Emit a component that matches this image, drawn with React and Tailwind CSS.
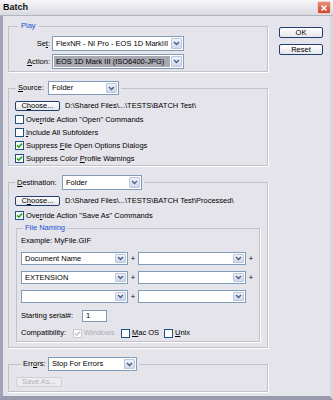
import React from 'react';

const Chevron = () => (
  <svg width="7" height="5" viewBox="0 0 7 5">
    <path d="M1 1 L3.5 3.5 L6 1" fill="none" stroke="#4d6185" strokeWidth="1.5" />
  </svg>
);

function Select({ value, className = '', hi }) {
  return (
    <div className={`flex border border-[#7f9db9] bg-white ${className}`}>
      <div className="flex-1 flex p-[1px] min-w-0">
        <span className={`flex-1 flex items-center px-[2px] whitespace-nowrap overflow-hidden ${hi ? 'bg-[#a9a9b3]' : ''}`}>
          {value}
        </span>
      </div>
      <div className="w-[11px] my-[1px] mr-[1px] flex items-center justify-center bg-gradient-to-b from-[#eef1f8] to-[#cfd8ec] border border-[#bcc6dc] rounded-[1px]">
        <Chevron />
      </div>
    </div>
  );
}

function Check({ checked, disabled, children }) {
  return (
    <div className="flex items-center gap-[2px]">
      <span
        className={`w-[9px] h-[9px] border flex items-center justify-center bg-white ${
          disabled ? 'border-[#c8c8ce]' : 'border-[#1c5180]'
        }`}
      >
        {checked && (
          <svg width="7" height="7" viewBox="0 0 7 7">
            <path
              d="M1 3.4 L2.8 5.2 L6 1.6"
              fill="none"
              stroke={disabled ? '#c4c4ca' : '#21a121'}
              strokeWidth="1.6"
            />
          </svg>
        )}
      </span>
      <span className={disabled ? 'text-[#acacb4]' : ''}>{children}</span>
    </div>
  );
}

function Btn({ children, className = '', disabled }) {
  return (
    <div
      className={`flex items-center justify-center rounded-[2px] border ${
        disabled
          ? 'border-[#cfcfd4] text-[#b0b0b8] bg-[#ececf0]'
          : 'border-[#1f3f73] bg-gradient-to-b from-white to-[#e6e6ea]'
      } ${className}`}
    >
      {children}
    </div>
  );
}

const U = ({ children }) => <span className="underline underline-offset-1">{children}</span>;

export default function App() {
  return (
    <div className="w-[333px] h-[400px] flex flex-col bg-[#e4e4ea] text-[7.5px] leading-none text-black font-['Liberation_Sans',Arial,sans-serif]">
      {/* Title bar */}
      <div className="h-[16px] flex items-center bg-gradient-to-b from-[#f7f7f9] to-[#d9d9e1] border-b border-[#b4b4c0]">
        <span className="pl-[3px] text-[9px] font-bold text-[#111]">Batch</span>
        <div className="ml-auto mr-[2px] w-[14px] h-[13px] rounded-[2px] border border-[#f3d0c8] bg-gradient-to-b from-[#ec8d78] to-[#c9452b] flex items-center justify-center">
          <svg width="8" height="8" viewBox="0 0 8 8">
            <path d="M1.5 1.5 L6.5 6.5 M6.5 1.5 L1.5 6.5" stroke="#fff" strokeWidth="1.6" />
          </svg>
        </div>
      </div>

      {/* Body */}
      <div className="flex-1 flex border-l-[3px] border-l-[#a2a2b6] border-r-[3px] border-r-[#d6d6de] border-b-[4px] border-b-[#9a9aae]">
        {/* Left column */}
        <div className="w-[260px] ml-[5px] flex flex-col">
          {/* Play */}
          <fieldset className="mt-[5px] border border-[#c2c2ca] shadow-[1px_1px_0_#fff]">
            <legend className="ml-[9px] px-[3px] h-[10px] flex items-center text-[#1450d2]">Play</legend>
            <div className="pt-[5px] pb-[2px] flex flex-col gap-[3px]">
              <div className="flex items-center h-[15px]">
                <span className="w-[43px] pr-[2px] text-right">
                  Se<U>t</U>:
                </span>
                <Select className="w-[132px] h-full" value="FlexNR - NI Pro - EOS 1D MarkIII" />
              </div>
              <div className="flex items-center h-[15px]">
                <span className="w-[43px] pr-[2px] text-right">
                  <U>A</U>ction:
                </span>
                <Select className="w-[132px] h-full" value="EOS 1D Mark III (ISO6400-JPG)" hi />
              </div>
            </div>
          </fieldset>

          {/* Source */}
          <fieldset className="mt-[9px] border border-[#c2c2ca] shadow-[1px_1px_0_#fff]">
            <legend className="ml-[7px] px-[2px] h-[14px] flex items-center gap-[2px]">
              <span className="w-[28px]">
                <U>S</U>ource:
              </span>
              <Select className="w-[71px] h-full" value="Folder" />
            </legend>
            <div className="pt-[6px] pl-[6px] flex flex-col">
              <div className="flex items-center gap-[5px] h-[10px]">
                <Btn className="w-[45px] h-full">
                  C<U>h</U>oose...
                </Btn>
                <span>D:\Shared Files\...\TESTS\BATCH Test\</span>
              </div>
              <div className="mt-[2px] flex flex-col">
                <div className="h-[13px] flex items-center">
                  <Check>
                    Ove<U>r</U>ride Action "Open" Commands
                  </Check>
                </div>
                <div className="h-[13px] flex items-center">
                  <Check>
                    <U>I</U>nclude All Subfolders
                  </Check>
                </div>
                <div className="h-[13px] flex items-center">
                  <Check checked>
                    Suppress <U>F</U>ile Open Options Dialogs
                  </Check>
                </div>
                <div className="h-[13px] flex items-center">
                  <Check checked>
                    Suppress Color <U>P</U>rofile Warnings
                  </Check>
                </div>
              </div>
            </div>
          </fieldset>

          {/* Destination */}
          <fieldset className="mt-[9px] border border-[#c2c2ca] shadow-[1px_1px_0_#fff]">
            <legend className="ml-[6px] px-[2px] h-[15px] flex items-center gap-[2px]">
              <span className="w-[43px]">
                <U>D</U>estination:
              </span>
              <Select className="w-[80px] h-full" value="Folder" />
            </legend>
            <div className="pt-[6px] pb-[5px] pl-[6px] flex flex-col">
              <div className="flex items-center gap-[5px] h-[10px]">
                <Btn className="w-[45px] h-full">
                  C<U>h</U>oose...
                </Btn>
                <span>D:\Shared Files\...\TESTS\BATCH Test\Processed\</span>
              </div>
              <div className="mt-[3px] h-[13px] flex items-center">
                <Check checked>
                  Ove<U>r</U>ride Action "Save As" Commands
                </Check>
              </div>

              {/* File Naming */}
              <fieldset className="mt-[1px] ml-[1px] w-[244px] border border-[#c2c2ca] shadow-[1px_1px_0_#fff]">
                <legend className="ml-[6px] px-[2px] h-[10px] flex items-center text-[#1450d2]">File Naming</legend>
                <div className="pt-[3px] pb-[3px] pl-[4px] flex flex-col">
                  <div className="h-[10px] flex items-center">Example: MyFile.GIF</div>
                  <div className="mt-[6px] flex flex-col gap-[6px]">
                    {[
                      ['Document Name', true],
                      ['EXTENSION', true],
                      ['', false],
                    ].map(([v, plus], i) => (
                      <div key={i} className="h-[13px] flex items-center">
                        <Select className="w-[107px] h-full" value={v} />
                        <span className="w-[10px] text-center">+</span>
                        <Select className="w-[108px] h-full" value="" />
                        {plus && <span className="w-[10px] text-center">+</span>}
                      </div>
                    ))}
                  </div>
                  <div className="mt-[7px] h-[12px] flex items-center">
                    <span className="w-[61px]">Starting serial#:</span>
                    <div className="w-[25px] h-full border border-[#7f9db9] bg-white flex items-center pl-[3px]">1</div>
                  </div>
                  <div className="mt-[6px] h-[10px] flex items-center">
                    <span className="w-[52px]">Compatibility:</span>
                    <div className="w-[48px]">
                      <Check checked disabled>
                        Windows
                      </Check>
                    </div>
                    <div className="w-[43px]">
                      <Check>
                        <U>M</U>ac OS
                      </Check>
                    </div>
                    <Check>
                      <U>U</U>nix
                    </Check>
                  </div>
                </div>
              </fieldset>
            </div>
          </fieldset>

          {/* Errors */}
          <fieldset className="mt-[9px] border border-[#c2c2ca] shadow-[1px_1px_0_#fff]">
            <legend className="ml-[12px] px-[2px] h-[14px] flex items-center gap-[2px]">
              <span className="w-[23px]">
                Err<U>o</U>rs:
              </span>
              <Select className="w-[89px] h-full" value="Stop For Errors" />
            </legend>
            <div className="pt-[6px] pb-[4px] pl-[7px]">
              <Btn disabled className="w-[46px] h-[10px]">
                Save As...
              </Btn>
            </div>
          </fieldset>
        </div>

        {/* Right column */}
        <div className="ml-[11px] mt-[11px] flex flex-col gap-[6px]">
          <Btn className="w-[44px] h-[11px]">OK</Btn>
          <Btn className="w-[44px] h-[11px]">Reset</Btn>
        </div>
      </div>
    </div>
  );
}
